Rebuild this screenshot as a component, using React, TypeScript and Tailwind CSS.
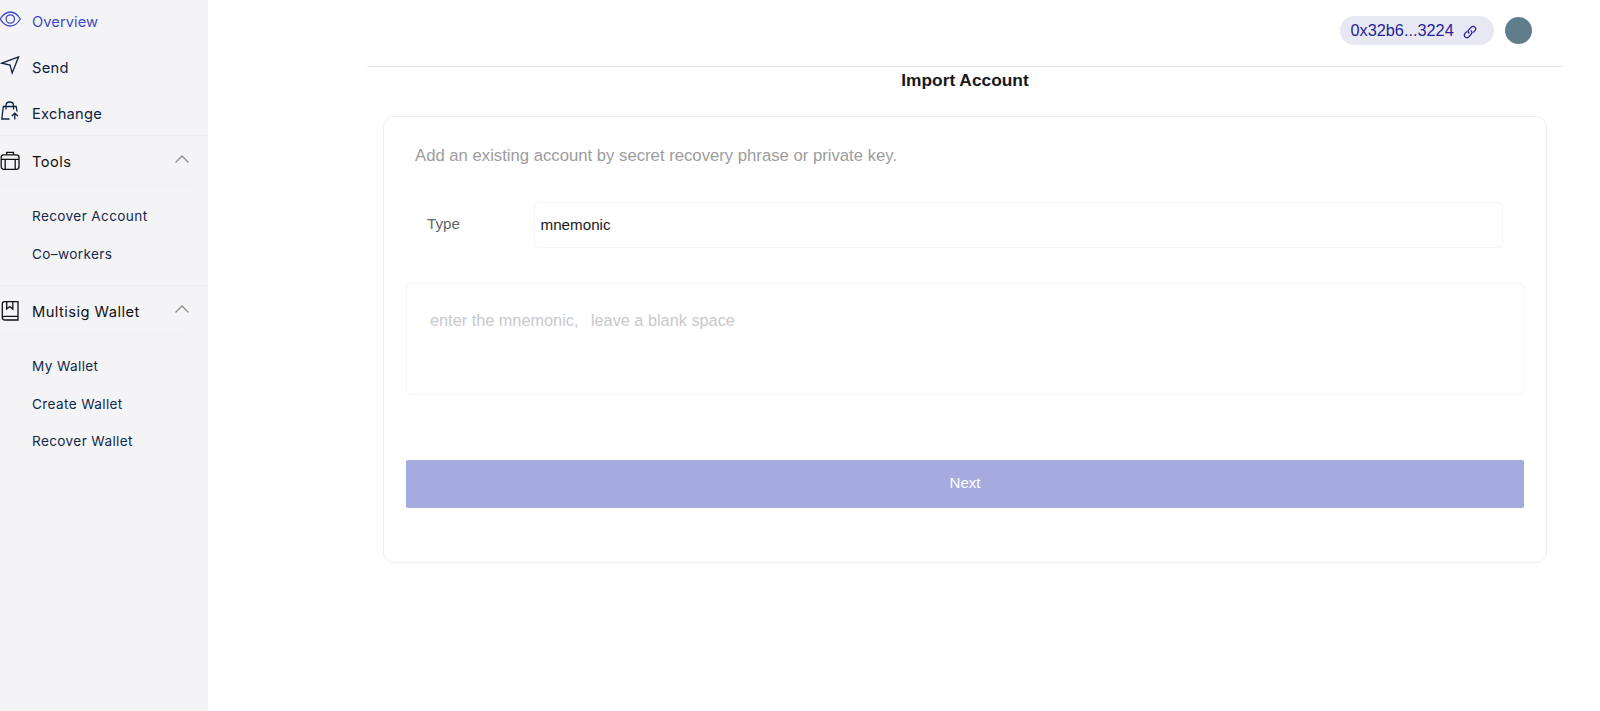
import type { ReactNode } from "react";

const Svg = ({ children, w = 22, className = "" }: { children: ReactNode; w?: number; className?: string }) => (
  <svg width={w} height="22" viewBox={`0 0 ${w} 22`} fill="none" stroke="currentColor" strokeWidth="1.3" className={`shrink-0 ${className}`}>
    {children}
  </svg>
);

const Eye = () => (
  <Svg className="mb-[7px]">
    <path d="M.2 11C3.200 6.200 6.500 4 10.300 4S17.400 6.200 20.400 11C17.400 15.800 14.100 18 10.300 18S3.200 15.800.2 11Z" />
    <circle cx="10.300" cy="11" r="4.200" />
  </Svg>
);
const Plane = () => (
  <Svg className="mb-[6px]">
    <path d="M1.800 9.200 18.600 2.800 12.200 19 10 11Z" />
  </Svg>
);
const Bag = () => (
  <Svg className="mb-[6px]">
    <path d="M9.500 19H1.800L3.300 6.500H16.200L17 11.500M6 9.500V5.500C6 .8 13.500.8 13.500 5.500V9.500M14.800 19.500V13.500M11.800 16 14.800 13.200 17.800 16" />
  </Svg>
);
const Case = () => (
  <Svg className="mb-[4px]">
    <rect x="1.200" y="4.800" width="17.800" height="14.500" rx="2.500" />
    <path d="M6.700 4.800V2.400H13.500V4.800M1.200 9.300H19M5.200 9.300V19.200M15.200 9.300V19.200" />
  </Svg>
);
const Book = () => (
  <Svg className="mb-[4px]">
    <path d="M18 16.300V1.700H4.500A2.300 2.300 0 0 0 2.300 4V17.800A2.300 2.300 0 0 0 4.500 20H18V16.300H4.500A2.200 2.200 0 0 0 2.300 18M6.700 1.700V9L9.800 6.500 12.800 9V1.700" />
  </Svg>
);
const Chevron = () => (
  <Svg className="mr-[15px] mb-[7px] text-[#8f8f93]">
    <path d="M4.500 14.500 11 8 17.500 14.500" />
  </Svg>
);

const Item = ({ icon, className, children }: { icon: ReactNode; className: string; children: ReactNode }) => (
  <div className={`flex items-center font-[Inter,sans-serif] text-[14.700px] ${className}`}>
    {icon}
    <span className="ml-[10px] whitespace-nowrap">{children}</span>
  </div>
);

const Group = ({ icon, title }: { icon: ReactNode; title: string }) => (
  <div className="border-t border-[#efeff2] font-[Inter,sans-serif]">
    <div className="mr-[17px] flex h-[49px] items-center border-b border-[#f1f1f4] pt-[5px] text-[14.700px] tracking-[0.450px] text-[#111]">
      {icon}
      <span className="ml-[10px] whitespace-nowrap">{title}</span>
      <span className="-mr-[17px] ml-auto">
        <Chevron />
      </span>
    </div>
  </div>
);

const Sub = ({ children }: { children: ReactNode }) => (
  <div className="flex h-[37.300px] items-center pl-8 font-[Inter,sans-serif] text-[13.600px] tracking-[0.370px] whitespace-nowrap text-[#12294a]">{children}</div>
);

export default function App() {
  return (
    <div className="flex h-[711px] w-[1600px] overflow-hidden bg-white font-['Liberation_Sans',Arial,sans-serif]">
      <aside className="w-[208px] shrink-0 bg-[#f4f4f7]">
        <Item icon={<Eye />} className="h-[45px] tracking-[0.050px] text-[#3f4bc4]">Overview</Item>
        <Item icon={<Plane />} className="h-[46px] tracking-[0.250px] text-[#0c2340]">Send</Item>
        <Item icon={<Bag />} className="h-[44px] pt-[2px] tracking-[0.250px] text-[#0c2340]">Exchange</Item>
        <Group icon={<Case />} title="Tools" />
        <div className="h-[100px] pt-[13px]">
          <Sub>Recover Account</Sub>
          <Sub>Co–workers</Sub>
        </div>
        <Group icon={<Book />} title="Multisig Wallet" />
        <div className="pt-[13px]">
          <Sub>My Wallet</Sub>
          <Sub>Create Wallet</Sub>
          <Sub>Recover Wallet</Sub>
        </div>
      </aside>
      <main className="ml-[159px] w-[1196px]">
        <header className="h-[67px] border-b border-[#e6e6e8]">
          <div className="mr-[20px] ml-[20px] flex h-[55px] items-start justify-end border-b border-[#fcfcfc] pt-4">
            <div className="flex h-[29px] w-[154px] items-center rounded-full bg-[#e8e8f4] pl-[10.500px] text-[16.300px] text-[#251f96]">
              <span>0x32b6...3224</span>
              <svg width="14" height="14" viewBox="0 0 14 14" fill="none" stroke="currentColor" strokeWidth="1.300" className="mt-[3px] ml-[9.500px]">
                <path d="M6.400 8.500C4.800 7.600 4.700 5.800 5.900 4.600L8.400 2.100C11 .1 14 3 12 5.600L10 7.600" />
                <path d="M7.600 5.500C9.200 6.400 9.300 8.200 8.100 9.400L5.600 11.900C3 13.900 0 11 2 8.400L4 6.400" />
              </svg>
            </div>
            <div className="mt-[1px] mr-[11px] ml-[11px] size-[27px] rounded-full bg-[#607d8b]" />
          </div>
        </header>
        <h1 className="h-[49px] text-center text-[17.330px] leading-[26px] font-bold text-[#17181a]">Import Account</h1>
        <section className="ml-4 h-[447px] w-[1164px] rounded-[11px] border border-[#efeff0] px-[22px]">
          <p className="pt-[26px] pl-[9px] text-[16.700px] leading-[26px] text-[#9c9c9c]">
            Add an existing account by secret recovery phrase or private key.
          </p>
          <div className="mt-[33px] flex h-[46px] items-center pl-[21px] text-[15.200px]">
            <span className="w-[107px] pb-[2px] text-[#666]">Type</span>
            <div className="flex h-full w-[969px] items-center rounded-[5px] border border-[#f4f4f5] pl-[5.500px] text-[#1b1b1b]">mnemonic</div>
          </div>
          <div className="mt-[35px] h-[112px] rounded-[5px] border border-[#f6f6f7] pt-[23px] pl-[23px] text-[16.300px] leading-[26px] text-[#c8c9cc]">
            <span>enter the mnemonic</span>
            <span className="inline-block w-[17px]">,</span>
            <span>leave a blank space</span>
          </div>
          <button className="mt-[65px] block h-12 w-full rounded-[2px] bg-[#a5abdf] pb-[2px] text-[15px] text-white">Next</button>
        </section>
      </main>
    </div>
  );
}
